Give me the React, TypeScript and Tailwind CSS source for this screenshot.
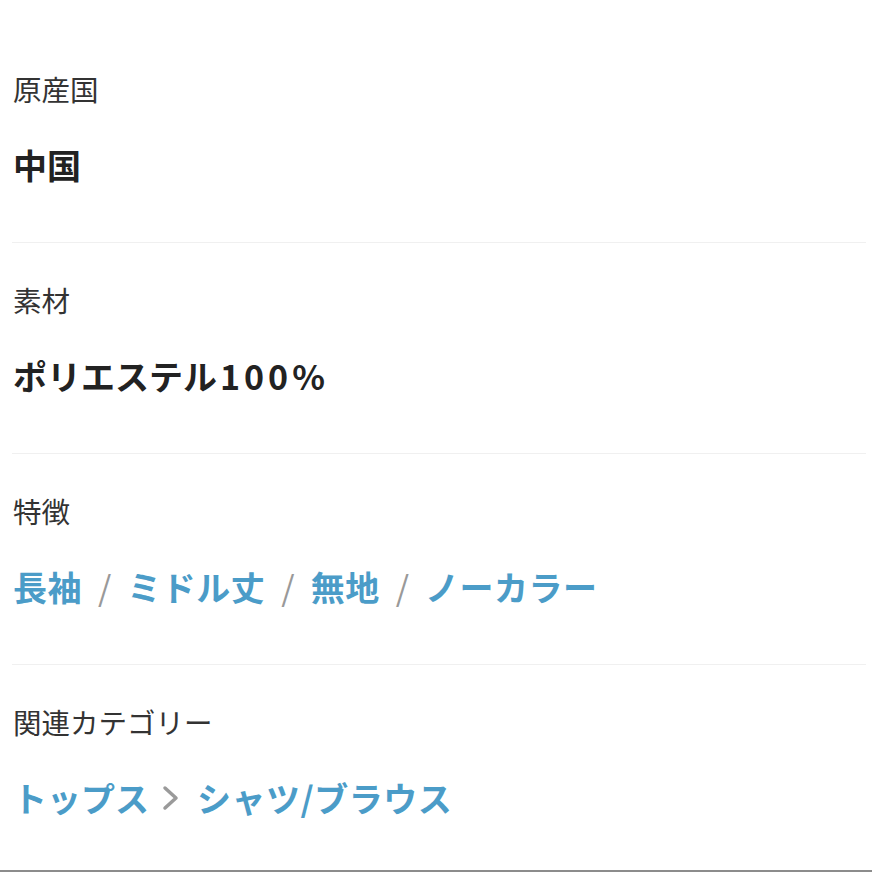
const font = { fontFamily: '"Noto Sans CJK JP", "Noto Sans", sans-serif' };

function Label({ children }: { children: React.ReactNode }) {
  return <div className="h-10 flex items-center text-[28.5px] text-[#333] leading-none">{children}</div>;
}

function Sep({ children }: { children: React.ReactNode }) {
  return <span className="mx-[16px] font-normal text-[#999]">{children}</span>;
}

export default function App() {
  const features = ["長袖", "ミドル丈", "無地", "ノーカラー"];
  return (
    <div className="min-h-screen bg-white pt-8" style={font}>
      <div className="pl-3 pr-[6px]">
        <section className="pt-[37px] pb-[55px] border-b border-[#f0f0f0]">
          <div className="pl-px">
            <Label>原産国</Label>
            <div className="mt-[34px] h-11 flex items-center text-[34px] font-bold text-[#222] leading-none">中国</div>
          </div>
        </section>
        <section className="pt-[37px] pb-[55px] border-b border-[#f0f0f0]">
          <div className="pl-px">
            <Label>素材</Label>
            <div className="mt-[34px] h-11 flex items-center text-[34px] font-bold text-[#222] leading-none">
              ポリエステル<span className="tracking-[4px] pl-[3px]">100%</span>
            </div>
          </div>
        </section>
        <section className="pt-[37px] pb-[55px] border-b border-[#f0f0f0]">
          <div className="pl-px">
            <Label>特徴</Label>
            <div className="mt-[34px] h-11 flex items-center text-[34px] font-bold text-[#4b9cc8] leading-none">
              {features.map((f, i) => (
                <span key={f} className="flex items-center">
                  {i > 0 && <Sep>/</Sep>}
                  <span className="tracking-[0.5px]">{f}</span>
                </span>
              ))}
            </div>
          </div>
        </section>
        <section className="pt-[37px] pb-[50px]">
          <div className="pl-px">
            <Label>関連カテゴリー</Label>
            <div className="mt-[34px] h-11 flex items-center text-[34px] font-bold text-[#4b9cc8] leading-none">
              <span>トップス</span>
              <svg className="ml-[13px] mr-[17px]" width="18" height="26" viewBox="0 0 18 26" fill="none">
                <path d="M3 3 L14 13 L3 23" stroke="#9a9a9a" strokeWidth="3.5" strokeLinecap="round" strokeLinejoin="round" />
              </svg>
              <span className="tracking-[0.5px]">シャツ/ブラウス</span>
            </div>
          </div>
        </section>
      </div>
      <div className="h-[2px] bg-[#8c8c8c]" />
    </div>
  );
}
